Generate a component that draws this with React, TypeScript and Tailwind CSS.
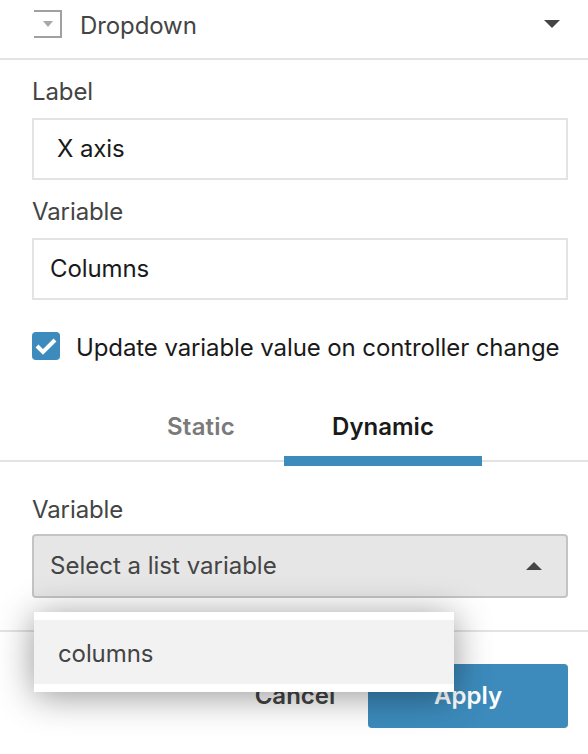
function Label({ children }: { children: string }) {
  return <div className="h-[26px] text-[24px] leading-[26px] tracking-[-0.1px] text-[#444444]">{children}</div>;
}

export default function App() {
  return (
    <div className="relative h-[754px] w-[588px] overflow-hidden bg-white font-['Inter',sans-serif]">
      {/* Control type select */}
      <div className="flex h-[60px] items-center border-b-2 border-[#e3e3e3] pb-[8px] pl-[34px] pr-[28px]">
        <svg width="28" height="28" viewBox="0 0 28 28" fill="none" className="mt-[-2px]">
          <path d="M0 1H27V27H0" stroke="#a0a0a0" strokeWidth="2" />
          <path d="M9 11H19L14 17Z" fill="#a8a8a8" />
        </svg>
        <span className="ml-[18px] mt-[2px] text-[24px] tracking-[-0.1px] text-[#444444]">Dropdown</span>
        <svg width="16" height="8" viewBox="0 0 16 8" className="ml-auto mt-[-2px]">
          <path d="M0 0H16L8 8Z" fill="#444444" />
        </svg>
      </div>

      <div className="pl-[32px] pr-[20px] pt-[19px]">
        <Label>Label</Label>
        <div className="mt-[13px] flex h-[62px] items-center border-2 border-[#e3e3e3] pb-[1px] pl-[23px] text-[24px] tracking-[-0.1px] text-[#1a1a1a]">X axis</div>
        <div className="mt-[19px]"><Label>Variable</Label></div>
        <div className="mt-[13px] flex h-[62px] items-center border-2 border-[#e3e3e3] pb-[1px] pl-[16px] text-[24px] tracking-[-0.1px] text-[#1a1a1a]">Columns</div>
        <div className="mt-[32px] flex h-[28px] items-center">
          <div className="flex h-[28px] w-[28px] items-center justify-center rounded-[4px] bg-[#3c8bbc]">
            <svg width="24" height="20" viewBox="0 0 24 20" fill="none">
              <path d="M3 10L9 16L21 4" stroke="white" strokeWidth="4" />
            </svg>
          </div>
          <span className="ml-[16px] mt-[3px] whitespace-nowrap text-[24px] tracking-[-0.1px] text-[#1a1a1a]">Update variable value on controller change</span>
        </div>
      </div>

      {/* Static / dynamic tabs */}
      <div className="mt-[46px] flex h-[56px] justify-center border-b-2 border-[#e3e3e3] pr-[20px]">
        <div className="flex h-[60px] w-[198px] justify-center pl-[32px] pt-[5px] text-[24px] font-semibold leading-[32px] tracking-[0.2px] text-[#7a7a7a]">Static</div>
        <div className="flex h-[60px] w-[198px] justify-center border-b-[10px] border-[#3c8bbc] pt-[5px] text-[24px] font-semibold leading-[32px] text-[#1a1a1a]">Dynamic</div>
      </div>

      <div className="pl-[32px] pr-[20px] pt-[35px]">
        <Label>Variable</Label>
        <div className="mt-[11px] flex h-[64px] items-center rounded-[4px] border-2 border-[#c4c4c4] bg-[#e6e6e6] pl-[16px] pr-[24px] text-[24px] text-[#444444]">
          Select a list variable
          <svg width="16" height="8" viewBox="0 0 16 8" className="ml-auto">
            <path d="M0 8H16L8 0Z" fill="#444444" />
          </svg>
        </div>
      </div>

      {/* Footer */}
      <div className="mt-[32px] flex items-start justify-end border-t-2 border-[#e3e3e3] px-[20px] pt-[32px]">
        <div className="flex h-[64px] w-[146px] items-center justify-center text-[24px] font-semibold text-[#444444]">Cancel</div>
        <div className="flex h-[64px] w-[200px] items-center justify-center rounded-[4px] bg-[#3c8bbc] text-[24px] font-semibold text-white">Apply</div>
      </div>

      {/* Open list */}
      <div className="absolute left-[34px] top-[612px] w-[420px] bg-white py-[8px] shadow-[0_4px_36px_rgba(0,0,0,0.42)]">
        <div className="flex h-[64px] items-center bg-[#f2f2f2] pl-[24px] pt-[3px] text-[24px] tracking-[-0.1px] text-[#444444]">columns</div>
      </div>
    </div>
  );
}
